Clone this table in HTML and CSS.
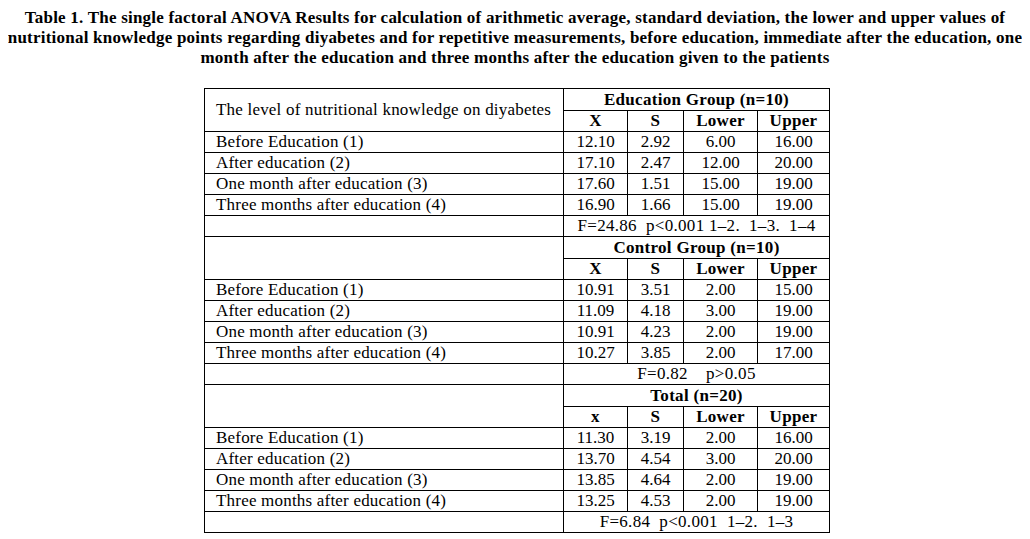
FILE: index.html
```html
<!DOCTYPE html>
<html>
<head>
<meta charset="utf-8">
<link rel="stylesheet" href="styles.css">
</head>
<body>
<h1 class="caption">Table 1. The single factoral ANOVA Results for calculation of arithmetic average, standard deviation, the lower and upper values of nutritional knowledge points regarding diyabetes and for repetitive measurements, before education, immediate after the education, one month after the education and three months after the education given to the patients</h1>
<table class="anova">
<colgroup>
<col class="c-label"><col class="c-x"><col class="c-s"><col class="c-lo"><col class="c-up">
</colgroup>
<tbody>
<tr class="group"><td class="label head" rowspan="2">The level of nutritional knowledge on diyabetes</td><th colspan="4">Education Group (n=10)</th></tr>
<tr class="cols"><th>X</th><th>S</th><th>Lower</th><th>Upper</th></tr>
<tr><td class="label">Before Education (1)</td><td>12.10</td><td>2.92</td><td>6.00</td><td>16.00</td></tr>
<tr><td class="label">After education (2)</td><td>17.10</td><td>2.47</td><td>12.00</td><td>20.00</td></tr>
<tr><td class="label">One month after education (3)</td><td>17.60</td><td>1.51</td><td>15.00</td><td>19.00</td></tr>
<tr><td class="label">Three months after education (4)</td><td>16.90</td><td>1.66</td><td>15.00</td><td>19.00</td></tr>
<tr class="stat"><td class="label"></td><td colspan="4">F=24.86&nbsp; p&lt;0.001 1–2.&nbsp; 1–3.&nbsp; 1–4</td></tr>

<tr class="group"><td class="label head" rowspan="2"></td><th colspan="4">Control Group (n=10)</th></tr>
<tr class="cols"><th>X</th><th>S</th><th>Lower</th><th>Upper</th></tr>
<tr><td class="label">Before Education (1)</td><td>10.91</td><td>3.51</td><td>2.00</td><td>15.00</td></tr>
<tr><td class="label">After education (2)</td><td>11.09</td><td>4.18</td><td>3.00</td><td>19.00</td></tr>
<tr><td class="label">One month after education (3)</td><td>10.91</td><td>4.23</td><td>2.00</td><td>19.00</td></tr>
<tr><td class="label">Three months after education (4)</td><td>10.27</td><td>3.85</td><td>2.00</td><td>17.00</td></tr>
<tr class="stat"><td class="label"></td><td colspan="4">F=0.82&nbsp;&nbsp;&nbsp; p&gt;0.05</td></tr>

<tr class="group"><td class="label head" rowspan="2"></td><th colspan="4">Total (n=20)</th></tr>
<tr class="cols"><th>x</th><th>S</th><th>Lower</th><th>Upper</th></tr>
<tr><td class="label">Before Education (1)</td><td>11.30</td><td>3.19</td><td>2.00</td><td>16.00</td></tr>
<tr><td class="label">After education (2)</td><td>13.70</td><td>4.54</td><td>3.00</td><td>20.00</td></tr>
<tr><td class="label">One month after education (3)</td><td>13.85</td><td>4.64</td><td>2.00</td><td>19.00</td></tr>
<tr><td class="label">Three months after education (4)</td><td>13.25</td><td>4.53</td><td>2.00</td><td>19.00</td></tr>
<tr class="stat"><td class="label"></td><td colspan="4">F=6.84&nbsp; p&lt;0.001&nbsp; 1–2.&nbsp; 1–3</td></tr>
</tbody>
</table>
</body>
</html>
```

FILE: styles.css
```css
html, body {
  background: #ffffff;
}
body {
  margin: 8px;
  font-family: "Liberation Serif", "Times New Roman", serif;
  color: #000000;
}
.caption {
  margin: 0 -4px;
  font-size: 17px;
  line-height: 20px;
  letter-spacing: 0.22px;
  font-weight: bold;
  text-align: center;
}
.anova {
  margin: 20px 0 0 196px;
  border-collapse: collapse;
  table-layout: fixed;
  width: 626px;
  font-size: 17px;
}
.c-label { width: 359px; }
.c-x { width: 64px; }
.c-s { width: 56px; }
.c-lo { width: 74px; }
.c-up { width: 72px; }
.anova td, .anova th {
  border: 1px solid #000000;
  padding: 0;
  height: 20px;
  line-height: 20px;
  text-align: center;
  vertical-align: middle;
  white-space: nowrap;
}
.anova th {
  font-weight: bold;
  letter-spacing: 0.3px;
}
.anova .group th {
  height: 21px;
  line-height: 21px;
}
.anova td.label {
  text-align: left;
  padding-left: 11px;
  letter-spacing: 0.2px;
}
.anova .stat td {
  letter-spacing: 0.3px;
}
```
